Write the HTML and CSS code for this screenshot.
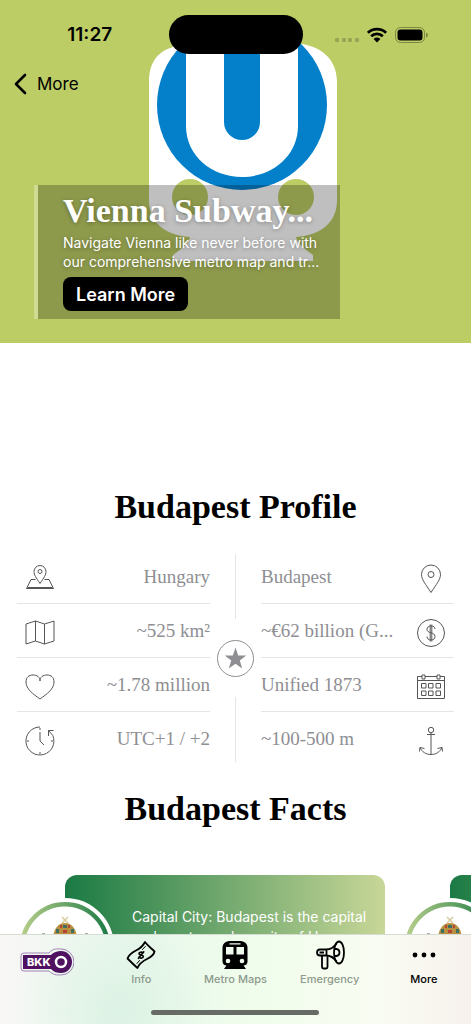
FILE: index.html
```html
<!DOCTYPE html>
<html lang="en">
<head>
    <meta charset="UTF-8">
    <meta name="viewport" content="width=device-width, initial-scale=1.0">
    <title>Budapest</title>
    <link rel="stylesheet" href="styles.css">
</head>
<body>
    <header class="hero">
        <svg class="hero-art" viewBox="0 0 471 343" preserveAspectRatio="xMidYMid slice" aria-hidden="true">
            <path fill="#fff" d="M149 82C149 62 158 50 177 46Q242 36 302 44C325 48 337 62 337 82V200C337 222 322 235 296 237Q297 244 313 255V261H173V255Q189 244 190 237C164 235 149 222 149 200Z"/>
            <circle cx="190" cy="197" r="18" fill="#bccd65"/>
            <circle cx="296" cy="197" r="18" fill="#bccd65"/>
            <circle cx="242" cy="105" r="85" fill="#0480cb"/>
            <path fill="#fff" d="M186 40H224V122A18 18 0 0 0 260 122V40H298V126C298 156 272 177 242 177C212 177 186 156 186 126Z"/>
        </svg>

        <div class="status-bar">
            <span class="clock">11:27</span>
            <span class="island"></span>
            <span class="status-icons">
                <svg width="24" height="16" viewBox="0 0 24 16" fill="#98a556">
                    <rect x="0" y="11" width="4" height="4" rx="1"/>
                    <rect x="7" y="11" width="4" height="4" rx="1"/>
                    <rect x="13" y="11" width="4" height="4" rx="1"/>
                    <rect x="20" y="11" width="4" height="4" rx="1"/>
                </svg>
                <svg width="20" height="16" viewBox="0 0 20 16" fill="none" stroke="#000" stroke-width="2.8">
                    <path d="M.9 5.8A13 13 0 0 1 19.1 5.8M4.2 9.2A8.3 8.3 0 0 1 15.8 9.2"/>
                    <path fill="#000" stroke="none" d="M10 15.4L6.6 12A4.8 4.8 0 0 1 13.4 12Z"/>
                </svg>
                <svg width="33" height="16" viewBox="0 0 33 16">
                    <rect x=".5" y=".5" width="29" height="15" rx="5" fill="none" stroke="#7d8843"/>
                    <rect x="2.5" y="2.5" width="25" height="11" rx="3" fill="#000"/>
                    <path d="M31 5.5Q33 6 33 8T31 10.5Z" fill="#7d8843"/>
                </svg>
            </span>
        </div>

        <a class="back" href="#">
            <svg width="13" height="22" viewBox="0 0 13 22" fill="none" stroke="#000" stroke-width="2.6" stroke-linecap="round" stroke-linejoin="round">
                <path d="M11 2L2 11L11 20"/>
            </svg>
            More
        </a>

        <div class="caption">
            <h1>Vienna Subway...</h1>
            <p>Navigate Vienna like never before with<br>our comprehensive metro map and tr...</p>
            <button type="button">Learn More</button>
        </div>
    </header>

    <main>
        <h2>Budapest Profile</h2>
        <section class="profile">
            <ul class="facts left">
                <li>
                    <svg class="icon" viewBox="0 0 30 30">
                        <path d="M15 19.5C11 13.5 9 11 9 7.500A6 6 0 0 1 21 7.500C21 11 19 13.5 15 19.5Z"/>
                        <circle cx="15" cy="7.5" r="2"/>
                        <path d="M10.5 15.5H6L1.5 24.5H28.5L24 15.5H19.5M2.5 23.5H27.5"/>
                    </svg>
                    <span>Hungary</span>
                </li>
                <li>
                    <svg class="icon" viewBox="0 0 30 30">
                        <path d="M1 6L10.5 3L19.5 6L29 3V23L19.5 26L10.5 23L1 26ZM10.5 3V23M19.5 6V26"/>
                    </svg>
                    <span>~525 km²</span>
                </li>
                <li>
                    <svg class="icon" viewBox="0 0 30 30">
                        <path d="M15 27C8 22 1 17 1 10C1 5 4 3 8 3C12 3 15 5 15 9C15 5 18 3 22 3C26 3 29 5 29 10C29 17 22 22 15 27Z"/>
                    </svg>
                    <span>~1.78 million</span>
                </li>
                <li>
                    <svg class="icon" viewBox="0 0 30 30">
                        <path d="M15 1A14 14 0 1 0 27.8 9.5L23.5 4.5M23.5 10V4.5H28.5M15 6V15L19 19M15 2V4M15 26V28M2 15H4M26 15H28"/>
                    </svg>
                    <span>UTC+1 / +2</span>
                </li>
            </ul>
            <div class="divider">
                <svg width="37" height="37" viewBox="0 0 37 37">
                    <circle cx="18.5" cy="18.5" r="18" fill="none" stroke="#8e8e93"/>
                    <path fill="#8e8e93" d="M18.5 7.5L21.2 15.5H29.2L22.8 20.5L25.2 28.5L18.5 23.7L11.8 28.5L14.2 20.5L7.8 15.5H15.8Z"/>
                </svg>
            </div>
            <ul class="facts right">
                <li>
                    <span>Budapest</span>
                    <svg class="icon" viewBox="0 0 30 30">
                        <path d="M15 28.5C9.5 20 5.5 15.5 5.5 10.5A9.5 9.5 0 0 1 24.5 10.5C24.5 15.5 20.5 20 15 28.5Z"/>
                        <circle cx="15" cy="10.5" r="3"/>
                    </svg>
                </li>
                <li>
                    <span>~€62 billion (G...</span>
                    <svg class="icon" viewBox="0 0 30 30">
                        <circle cx="15" cy="15" r="13.5"/>
                        <path d="M19 11C19 9 17.5 8 15 8C12.5 8 11 9.3 11 11.3C11 16 19 13.5 19 18.5C19 20.7 17.5 22 15 22C12.5 22 11 20.7 11 18.5M14.2 6.5V23.5M15.8 6.5V23.5"/>
                    </svg>
                </li>
                <li>
                    <span>Unified 1873</span>
                    <svg class="icon" viewBox="0 0 30 30">
                        <path d="M6 4.5H1.5V26.5H28.5V4.5H24M9 4.5H21M1.5 8.5H28.5M6 3H9V7H6ZM21 3H24V7H21Z"/>
                        <path d="M5.5 11.5H10V16H5.5ZM12.5 11.5H17V16H12.5ZM20 11.5H24.5V16H20ZM5.5 19H10V23.5H5.5ZM12.5 19H17V23.5H12.5ZM20 19H24.5V23.5H20Z"/>
                    </svg>
                </li>
                <li>
                    <span>~100-500 m</span>
                    <svg class="icon" viewBox="0 0 30 30">
                        <circle cx="15" cy="4" r="2.7"/>
                        <path d="M15 7V28.5M11 8.5H19M4 21.5C6 26 10 28.5 15 28.5S24 26 26 21.5M3.5 25.5L4 21.5L8.5 22.5M26.5 25.5L26 21.5L21.5 22.5"/>
                    </svg>
                </li>
            </ul>
        </section>

        <h2>Budapest Facts</h2>
        <section class="cards">
            <article class="card">
                <div class="badge">
                    <svg viewBox="0 0 82 82" aria-hidden="true">
                        <path d="M38 11L44 17M38 17L44 11" stroke="#d9cba0" stroke-width="1.5"/>
                        <path fill="#b8903f" d="M29 34C29 23 34 17 41 17S53 23 53 34Z"/>
                        <path fill="#3f6f62" d="M32 23H35V27H32ZM39 19H43V22H39ZM47 23H50V27H47ZM36 29H39V33H36ZM43 29H46V33H43Z"/>
                        <path fill="#b4433a" d="M36 19H38V22H36ZM44 19H46V22H44ZM32 29H34V32H32ZM39 24H43V27H39ZM48 29H50V32H48Z"/>
                        <path fill="#cd2a3e" d="M24 36H58V56Q56 68 41 72Q26 68 24 56Z"/>
                        <path fill="#aaa" d="M18 27H21V29H18ZM61 27H64V29H61Z"/>
                    </svg>
                </div>
                <p>Capital City: Budapest is the capital<br>and most populous city of Hungary,</p>
            </article>
            <article class="card">
                <div class="badge">
                    <svg viewBox="0 0 82 82" aria-hidden="true">
                        <path d="M38 11L44 17M38 17L44 11" stroke="#d9cba0" stroke-width="1.5"/>
                        <path fill="#b8903f" d="M29 34C29 23 34 17 41 17S53 23 53 34Z"/>
                        <path fill="#3f6f62" d="M32 23H35V27H32ZM39 19H43V22H39ZM47 23H50V27H47ZM36 29H39V33H36ZM43 29H46V33H43Z"/>
                        <path fill="#b4433a" d="M36 19H38V22H36ZM44 19H46V22H44ZM32 29H34V32H32ZM39 24H43V27H39ZM48 29H50V32H48Z"/>
                        <path fill="#cd2a3e" d="M24 36H58V56Q56 68 41 72Q26 68 24 56Z"/>
                        <path fill="#aaa" d="M18 27H21V29H18Z"/>
                    </svg>
                </div>
            </article>
        </section>
    </main>

    <nav class="tab-bar">
        <a href="#" class="brand">
            <svg width="54" height="28" viewBox="0 0 54 28">
                <path fill="none" stroke="#a283b5" d="M4 5H29C33 0 37 1 41 1A13 13 0 0 1 41 27C37 27 33 27 29 23H4Q1 23 1 20V8Q1 5 4 5Z"/>
                <path fill="#4e1260" d="M3 7H31C34 4 37 3 41 3A11 11 0 0 1 41 25C37 25 34 24 31 21H3Z"/>
                <circle cx="41" cy="14" r="5" fill="none" stroke="#fff" stroke-width="2.5"/>
                <text class="brand-text" x="7" y="18">BKK</text>
            </svg>
        </a>
        <a href="#">
            <svg width="30" height="30" viewBox="0 0 30 30" fill="none" stroke="#000" stroke-width="1.8" stroke-linejoin="round" stroke-linecap="round">
                <path d="M19 2C22 6 25 8 28.5 11.5C28 15 25 17 21 19C17 21 13.5 23 11.5 28C8 25 5 22 1.5 18.5C3 14.5 6 12.5 10 10.5C14 8.5 17 6 19 2Z"/>
                <path stroke-width="1.6" d="M17 13C15.5 11.5 13 12 13 13.8C13.5 15.8 17 14.2 17.3 16.3C17.3 18.2 14.5 18.8 13 17M17.8 11.8L12.5 18.3"/>
                <path stroke-width="1" d="M19.3 6.5L16.5 9.5M11 23.5L13.5 20.5"/>
            </svg>
            Info
        </a>
        <a href="#">
            <svg width="30" height="30" viewBox="0 0 30 30">
                <path d="M9 1H21Q27 2 27.5 7V22Q27 25 24 25.5H23.5L26 29H4L6.5 25.5H6Q3 25 2.5 22V7Q3 2 9 1Z"/>
                <path fill="#effbed" d="M9.5 3.2H20.5V4.5H9.5ZM6 7H13.5V14.5H6ZM16.5 7H24V14.5H16.5Z"/>
                <circle cx="8" cy="21" r="2.3" fill="#effbed"/>
                <circle cx="22" cy="21" r="2.3" fill="#effbed"/>
            </svg>
            Metro Maps
        </a>
        <a href="#">
            <svg width="30" height="30" viewBox="0 0 30 30" fill="none" stroke="#000" stroke-width="1.8" stroke-linejoin="round">
                <ellipse cx="24" cy="12.5" rx="5" ry="11"/>
                <path d="M21.5 3.5C18.5 8 15 9.5 11 9.5H5Q2 9.5 2 12.5T5 15.5H11C15 15.5 18.5 17 21.5 21.5M11.5 9.5V15.5M7 15.5V27Q7 28.5 8.5 28.5H11Q12.5 28.5 12.5 27V16M4.5 12.5H9"/>
                <path d="M19.5 9H21.5Q24.5 9.5 24.5 12.5T21.5 16H19.5"/>
            </svg>
            Emergency
        </a>
        <a href="#" class="active">
            <svg width="30" height="30" viewBox="0 0 30 30">
                <circle cx="6" cy="15" r="2.4"/>
                <circle cx="15" cy="15" r="2.4"/>
                <circle cx="24" cy="15" r="2.4"/>
            </svg>
            More
        </a>
        <span class="home-indicator"></span>
    </nav>
</body>
</html>
```
FILE: styles.css
```css
* {
    box-sizing: border-box;
}

body {
    margin: 0;
    height: 100vh;
    overflow: hidden;
    background-color: white;
    color: #000;
    font-family: Inter, "Liberation Sans", sans-serif;
}

a {
    color: inherit;
    text-decoration: none;
}

/* hero */
.hero {
    position: relative;
    display: flex;
    flex-direction: column;
    align-items: flex-start;
    height: 343px;
    padding-bottom: 24px;
    background-color: #bccd65;
}

.hero-art {
    position: absolute;
    top: 0;
    left: 0;
    width: 100%;
    height: 100%;
}

.status-bar {
    position: relative;
    display: grid;
    grid-template-columns: 1fr 134px 1fr;
    align-items: center;
    width: 100%;
    padding: 15px 11px 0;
}

.clock {
    text-align: center;
    font-size: 19px;
    font-weight: 600;
}

.island {
    height: 39px;
    border-radius: 20px;
    background-color: #000;
}

.status-icons {
    display: flex;
    justify-content: center;
    align-items: center;
    gap: 8px;
}

.back {
    position: relative;
    display: flex;
    align-items: center;
    gap: 10px;
    margin: 18px 0 0 14px;
    font-size: 17px;
    line-height: 24px;
}

.caption {
    position: relative;
    width: 65%;
    margin: auto 0 0 34px;
    padding: 8px 20px 8px 25px;
    border-left: 4px solid rgba(255, 255, 255, 0.3);
    background-color: rgba(0, 0, 0, 0.25);
    background-clip: padding-box;
    color: white;
    text-shadow: 0 1px 4px rgba(0, 0, 0, 0.3);
    white-space: nowrap;
}

h1, h2 {
    margin: 0;
    font-family: "Source Serif Pro", "Liberation Serif", serif;
    font-size: 34px;
    font-weight: bold;
}

.caption h1 {
    margin-bottom: 4px;
    line-height: 36px;
}

.caption p {
    margin: 0 0 6px;
    font-size: 14px;
    line-height: 19px;
}

.caption button {
    display: block;
    height: 34px;
    padding: 0 13px;
    border: 0;
    border-radius: 8px;
    background-color: #000;
    color: white;
    font-family: inherit;
    font-size: 18px;
    font-weight: 600;
}

/* city profile */
main {
    padding-top: 142px;
}

h2 {
    text-align: center;
    line-height: 44px;
}

.profile {
    display: grid;
    grid-template-columns: 1fr 51px 1fr;
    padding: 21px 17px;
}

.facts {
    margin: 0;
    padding: 0;
    list-style: none;
    color: #8e8e93;
    font-family: "Source Serif Pro", "Liberation Serif", serif;
    font-size: 19px;
}

.facts li {
    display: flex;
    justify-content: space-between;
    align-items: center;
    height: 54px;
    padding-left: 8px;
    border-bottom: 1px solid #e5e5e7;
    white-space: nowrap;
}

.facts.right li {
    padding: 0 8px 0 0;
}

.facts li:last-child {
    border-bottom: 0;
}

.icon {
    width: 30px;
    height: 30px;
    margin-top: 4px;
    fill: none;
    stroke: #555;
    stroke-width: 1;
}

.divider {
    display: flex;
    flex-direction: column;
    align-items: center;
    justify-content: space-between;
    padding: 4px 0;
}

.divider::before,
.divider::after {
    content: "";
    width: 1px;
    height: 65px;
    background-color: #e5e5e7;
}

/* fact cards */
.cards {
    display: flex;
    gap: 65px;
    padding: 44px 0 0 65px;
    overflow: hidden;
}

.card {
    position: relative;
    flex: 0 0 320px;
    height: 144px;
    padding: 32px 10px 0 67px;
    border-radius: 12px;
    background: linear-gradient(to right, #1b7a44, #c8d798);
    color: white;
}

.card p {
    margin: 0;
    font-size: 14px;
    line-height: 20px;
    white-space: nowrap;
}

.badge {
    position: absolute;
    top: 23px;
    left: -49px;
    width: 98px;
    height: 98px;
    border: 4px solid white;
    border-radius: 50%;
    background: radial-gradient(white 40px, transparent 41px), linear-gradient(to right, #b9cf8c, #1b7a44);
}

.badge svg {
    display: block;
    width: 82px;
    height: 82px;
    margin: 4px;
}

/* bottom tabs */
.tab-bar {
    position: fixed;
    right: 0;
    bottom: 0;
    left: 0;
    display: grid;
    grid-template-columns: repeat(5, 1fr);
    height: 90px;
    padding-top: 5px;
    border-top: 1px solid #d5ddd5;
    background: radial-gradient(circle at 25% 85%, rgba(219, 242, 227, 0.9), transparent 28%), linear-gradient(to right, #f8f7f6, #e9f8ec 28%, #f0fdec 55%, #f9fcf2 80%, #f7f1ed);
}

.tab-bar a {
    display: flex;
    flex-direction: column;
    align-items: center;
    height: 48px;
    color: #8d9a8c;
    font-size: 11px;
    font-weight: 500;
    line-height: 18px;
}

.tab-bar .brand {
    padding-top: 8px;
}

.brand-text {
    fill: white;
    font-size: 11px;
    font-weight: 800;
}

.tab-bar .active {
    color: #000;
}

.home-indicator {
    grid-column: 1 / -1;
    justify-self: center;
    align-self: end;
    width: 168px;
    height: 5px;
    margin-bottom: 9px;
    border-radius: 3px;
    background-color: #666b66;
}
```
